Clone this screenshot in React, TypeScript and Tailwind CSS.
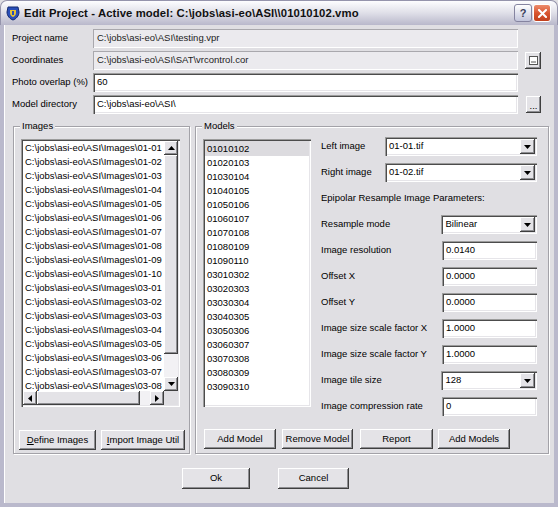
import React from 'react';

const sunken =
  'shadow-[inset_1px_1px_0_#9c9c9c,inset_2px_2px_0_#4c4c4c,inset_-1px_-1px_0_#ffffff,inset_-2px_-2px_0_#e6e5e9]';
const sunkenLight = 'shadow-[inset_1px_1px_0_#a9a8ad,inset_-1px_-1px_0_#ffffff]';
const raised =
  'shadow-[inset_-1px_-1px_0_#3f3f3f,inset_1px_1px_0_#ffffff,inset_-2px_-2px_0_#8e8e92]';

const imageFiles = [
  '01-01', '01-02', '01-03', '01-04', '01-05', '01-06', '01-07', '01-08', '01-09', '01-10',
  '03-01', '03-02', '03-03', '03-04', '03-05', '03-06', '03-07', '03-08',
];

const models = [
  '01010102', '01020103', '01030104', '01040105', '01050106', '01060107', '01070108', '01080109',
  '01090110', '03010302', '03020303', '03030304', '03040305', '03050306', '03060307', '03070308',
  '03080309', '03090310',
];

function Arrow({ dir }: { dir: 'up' | 'down' | 'left' | 'right' }) {
  if (dir === 'up' || dir === 'down') {
    return (
      <svg width="7" height="4" viewBox="0 0 7 4">
        <path d={dir === 'down' ? 'M0 0h7L3.5 4z' : 'M0 4h7L3.5 0z'} fill="#000" />
      </svg>
    );
  }
  return (
    <svg width="4" height="7" viewBox="0 0 4 7">
      <path d={dir === 'right' ? 'M0 0v7L4 3.5z' : 'M4 0v7L0 3.5z'} fill="#000" />
    </svg>
  );
}

function ArrowBtn({ dir, className = '' }: { dir: 'up' | 'down' | 'left' | 'right'; className?: string }) {
  return (
    <div className={`w-[14px] h-[14px] shrink-0 bg-[#e4e3e7] ${raised} flex items-center justify-center ${className}`}>
      <Arrow dir={dir} />
    </div>
  );
}

function Field({ value, disabled, className = '' }: { value: string; disabled?: boolean; className?: string }) {
  return (
    <div
      className={`h-[19px] flex items-center pl-[4px] overflow-hidden whitespace-nowrap ${
        disabled ? `bg-[#ebeaee] ${sunkenLight} text-[#222]` : `bg-white ${sunken}`
      } ${className}`}
    >
      {value}
    </div>
  );
}

function Combo({ value, className = '' }: { value: string; className?: string }) {
  return (
    <div className={`h-[19px] flex items-center bg-white ${sunken} ${className}`}>
      <span className="flex-1 pl-[4px]">{value}</span>
      <div className={`w-[15px] h-[15px] mr-[2px] bg-[#e4e3e7] ${raised} flex items-center justify-center`}>
        <Arrow dir="down" />
      </div>
    </div>
  );
}

function Btn({ children, className = '' }: { children: React.ReactNode; className?: string }) {
  return (
    <div className={`h-[20px] shrink-0 bg-[#e4e3e7] ${raised} flex items-center justify-center ${className}`}>
      {children}
    </div>
  );
}

function Group({ title, className = '', children }: { title: string; className?: string; children: React.ReactNode }) {
  return (
    <div
      className={`relative h-[328px] border border-[#a3a2a8] shadow-[1px_1px_0_#ffffff,inset_1px_1px_0_#ffffff] ${className}`}
    >
      <span className="absolute -top-[7px] left-[6px] px-[2px] bg-[#e0dfe3] leading-[12px]">{title}</span>
      {children}
    </div>
  );
}

function TitleBar() {
  return (
    <div className="h-[25px] shrink-0 flex items-center pl-[5px] pr-[6px] rounded-t-[7px] bg-gradient-to-b from-[#fdfdff] via-[#dfdfe8] to-[#b9b8cb] border-t border-x border-[#9594ac]">
      <svg width="14" height="15" viewBox="0 0 14 15" className="shrink-0">
        <path d="M2 1h10l1 5c0 4-3 7-6 8C4 13 1 10 1 6z" fill="#2a4fb8" stroke="#132a70" strokeWidth="1" />
        <path d="M4 4h6v3c0 2-1.5 3.5-3 4C5.5 10.5 4 9 4 7z" fill="#e8c433" />
        <path d="M6 5h2v4H6z" fill="#2a4fb8" />
      </svg>
      <span className="ml-[4px] flex-1 font-bold text-[11.3px] text-[#111] whitespace-nowrap tracking-[0.1px]">
        Edit Project - Active model: C:\jobs\asi-eo\ASI\\01010102.vmo
      </span>
      <div className="w-[18px] h-[18px] rounded-[3px] border border-[#8584a0] bg-gradient-to-b from-[#ffffff] to-[#c3c6dc] flex items-center justify-center font-bold text-[11px] text-[#3a3f5c]">
        ?
      </div>
      <div className="ml-[1px] w-[18px] h-[18px] rounded-[3px] border border-[#ffffff] bg-gradient-to-b from-[#ec8b6c] via-[#d9552f] to-[#c1401d] flex items-center justify-center">
        <svg width="9" height="9" viewBox="0 0 9 9">
          <path d="M1 1l7 7M8 1L1 8" stroke="#fff" strokeWidth="2" strokeLinecap="square" />
        </svg>
      </div>
    </div>
  );
}

export default function App() {
  return (
    <div className="w-[558px] h-[507px] flex flex-col bg-[#e0dfe3] text-black text-[9.5px] font-['Liberation_Sans',Arial,sans-serif]">
      <TitleBar />
      <div className="flex-1 flex flex-col pl-[8px] pr-[5px] pt-[4px] border-x-[4px] border-b-[4px] border-[#bab9cc] shadow-[inset_1px_0_0_#ffffff]">
        {/* top rows */}
        <div className="flex flex-col gap-[3px]">
          <div className="flex items-center">
            <span className="w-[81px]">Project name</span>
            <Field value="C:\jobs\asi-eo\ASI\testing.vpr" disabled className="w-[425px]" />
          </div>
          <div className="flex items-center">
            <span className="w-[81px]">Coordinates</span>
            <Field value="C:\jobs\asi-eo\ASI\SAT\vrcontrol.cor" disabled className="w-[425px]" />
            <div className={`ml-[7px] w-[16px] h-[17px] bg-[#e4e3e7] ${raised} flex items-center justify-center`}>
              <svg width="9" height="9" viewBox="0 0 9 9">
                <rect x="0.5" y="0.5" width="8" height="8" fill="#fff" stroke="#555" />
                <path d="M2 6h5" stroke="#555" />
              </svg>
            </div>
          </div>
          <div className="flex items-center">
            <span className="w-[81px]">Photo overlap (%)</span>
            <Field value="60" className="w-[425px]" />
          </div>
          <div className="flex items-center">
            <span className="w-[81px]">Model directory</span>
            <Field value="C:\jobs\asi-eo\ASI\" className="w-[425px]" />
            <div className={`ml-[8px] w-[15px] h-[17px] bg-[#e4e3e7] ${raised} flex items-end justify-center pb-[3px] leading-none`}>
              ...
            </div>
          </div>
        </div>

        {/* groups */}
        <div className="flex mt-[12px] ml-[1px] gap-[5px]">
          <Group title="Images" className="w-[177px]">
            <div className="pt-[12px] pl-[7px]">
              <div className={`w-[159px] h-[268px] bg-white ${sunken} p-[2px] flex flex-col`}>
                <div className="flex h-[250px]">
                  <div className="w-[141px] overflow-hidden whitespace-nowrap pl-[2px]">
                    {imageFiles.map((f) => (
                      <div key={f} className="h-[14px] leading-[14px]">
                        C:\jobs\asi-eo\ASI\Images\{f}
                      </div>
                    ))}
                  </div>
                  <div className="w-[14px] flex flex-col">
                    <ArrowBtn dir="up" />
                    <div className={`h-[199px] bg-[#e4e3e7] ${raised}`} />
                    <div className="flex-1 bg-[#f2f1f4]" />
                    <ArrowBtn dir="down" />
                  </div>
                </div>
                <div className="flex h-[14px]">
                  <ArrowBtn dir="left" />
                  <div className={`w-[103px] bg-[#e4e3e7] ${raised}`} />
                  <div className="flex-1 bg-[#f2f1f4]" />
                  <ArrowBtn dir="right" />
                  <div className="w-[14px] bg-[#e0dfe3]" />
                </div>
              </div>
            </div>
            <div className="flex mt-[23px] pl-[5px] gap-[5px]">
              <Btn className="w-[77px]">
                <span>
                  <span className="underline">D</span>efine Images
                </span>
              </Btn>
              <Btn className="w-[84px]">
                <span>
                  <span className="underline">I</span>mport Image Util
                </span>
              </Btn>
            </div>
          </Group>

          <Group title="Models" className="w-[354px]">
            <div className="flex h-[280px] pt-[12px] pl-[7px]">
              <div className={`w-[108px] h-[268px] shrink-0 bg-white ${sunken} p-[2px]`}>
                {models.map((m, i) => (
                  <div
                    key={m}
                    className={`h-[14px] leading-[14px] pl-[2px] ${i === 0 ? 'bg-[#dcdbdf] h-[15px] leading-[15px]' : ''}`}
                  >
                    {m}
                  </div>
                ))}
              </div>
              <div className="ml-[10px] -mt-[2px] flex flex-col gap-[7px] w-[216px] shrink-0">
                <div className="flex items-center h-[19px] shrink-0">
                  <span className="w-[64px]">Left image</span>
                  <Combo value="01-01.tif" className="w-[152px]" />
                </div>
                <div className="flex items-center h-[19px] shrink-0">
                  <span className="w-[64px]">Right image</span>
                  <Combo value="01-02.tif" className="w-[152px]" />
                </div>
                <div className="flex items-center h-[19px] shrink-0">Epipolar Resample Image Parameters:</div>
                <div className="flex items-center h-[19px] shrink-0">
                  <span className="w-[121px]">Resample mode</span>
                  <Combo value="Bilinear" className="w-[96px]" />
                </div>
                <div className="flex items-center h-[19px] shrink-0">
                  <span className="w-[121px]">Image resolution</span>
                  <Field value="0.0140" className="w-[95px]" />
                </div>
                <div className="flex items-center h-[19px] shrink-0">
                  <span className="w-[121px]">Offset X</span>
                  <Field value="0.0000" className="w-[95px]" />
                </div>
                <div className="flex items-center h-[19px] shrink-0">
                  <span className="w-[121px]">Offset Y</span>
                  <Field value="0.0000" className="w-[95px]" />
                </div>
                <div className="flex items-center h-[19px] shrink-0">
                  <span className="w-[121px]">Image size scale factor X</span>
                  <Field value="1.0000" className="w-[95px]" />
                </div>
                <div className="flex items-center h-[19px] shrink-0">
                  <span className="w-[121px]">Image size scale factor Y</span>
                  <Field value="1.0000" className="w-[95px]" />
                </div>
                <div className="flex items-center h-[19px] shrink-0">
                  <span className="w-[121px]">Image tile size</span>
                  <Combo value="128" className="w-[96px]" />
                </div>
                <div className="flex items-center h-[19px] shrink-0">
                  <span className="w-[121px]">Image compression rate</span>
                  <Field value="0" className="w-[95px]" />
                </div>
              </div>
            </div>
            <div className="flex mt-[22px] pl-[8px]">
              <Btn className="w-[72px]">Add Model</Btn>
              <Btn className="w-[71px] ml-[6px]">Remove Model</Btn>
              <Btn className="w-[73px] ml-[7px]">Report</Btn>
              <Btn className="w-[72px] ml-[5px]">Add Models</Btn>
            </div>
          </Group>
        </div>

        {/* dialog buttons */}
        <div className="flex mt-[14px] ml-[170px] gap-[28px]">
          <Btn className="w-[68px] h-[21px]">Ok</Btn>
          <Btn className="w-[71px] h-[21px]">Cancel</Btn>
        </div>
      </div>
    </div>
  );
}
